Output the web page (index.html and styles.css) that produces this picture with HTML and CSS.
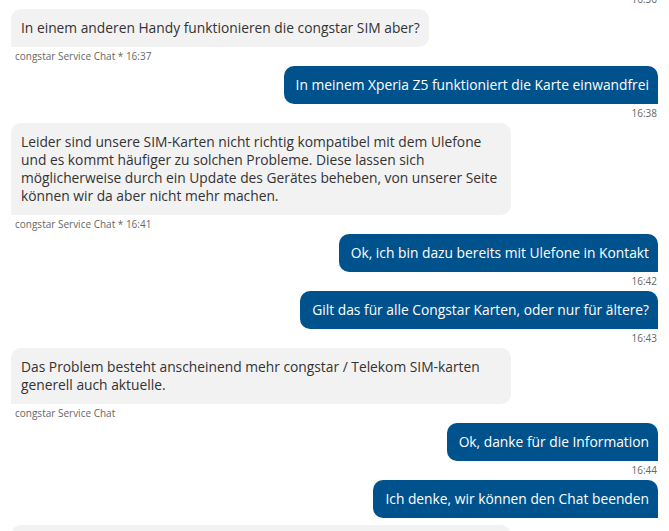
FILE: index.html
```html
<!DOCTYPE html>
<html lang="de">
<head>
<meta charset="utf-8">
<title>congstar Service Chat</title>
<link rel="stylesheet" href="styles.css">
</head>
<body>
<div class="chat">
  <div class="msg out"><div class="meta">16:36</div></div>

  <div class="msg in">
    <div class="bubble">In einem anderen Handy funktionieren die congstar SIM aber?</div>
    <div class="meta">congstar Service Chat * 16:37</div>
  </div>

  <div class="msg out">
    <div class="bubble">In meinem Xperia Z5 funktioniert die Karte einwandfrei</div>
    <div class="meta">16:38</div>
  </div>

  <div class="msg in">
    <div class="bubble">Leider sind unsere SIM-Karten nicht richtig kompatibel mit dem Ulefone und es kommt häufiger zu solchen Probleme. Diese lassen sich möglicherweise durch ein Update des Gerätes beheben, von unserer Seite können wir da aber nicht mehr machen.</div>
    <div class="meta">congstar Service Chat * 16:41</div>
  </div>

  <div class="msg out">
    <div class="bubble">Ok, ich bin dazu bereits mit Ulefone in Kontakt</div>
    <div class="meta">16:42</div>
  </div>

  <div class="msg out">
    <div class="bubble">Gilt das für alle Congstar Karten, oder nur für ältere?</div>
    <div class="meta">16:43</div>
  </div>

  <div class="msg in">
    <div class="bubble">Das Problem besteht anscheinend mehr congstar / Telekom SIM-karten generell auch aktuelle.</div>
    <div class="meta">congstar Service Chat</div>
  </div>

  <div class="msg out">
    <div class="bubble">Ok, danke für die Information</div>
    <div class="meta">16:44</div>
  </div>

  <div class="msg out last">
    <div class="bubble">Ich denke, wir können den Chat beenden</div>
  </div>

  <div class="msg in">
    <div class="bubble">Vielen Dank für Ihre Geduld. Gibt es sonst noch etwas, bei dem ich Ihnen weiterhelfen kann?</div>
  </div>
</div>
</body>
</html>
```

FILE: styles.css
```css
html, body {
  margin: 0;
  padding: 0;
  background: #ffffff;
  overflow: hidden;
}

.chat {
  display: flex;
  flex-direction: column;
  padding: 0 11px;
  margin-top: -10px;
  font-family: "Open Sans", "Liberation Sans", sans-serif;
  font-size: 13.8px;
}

.msg {
  display: flex;
  flex-direction: column;
}

.msg.in {
  align-items: flex-start;
}

.msg.out {
  align-items: flex-end;
}

.msg.last {
  margin-bottom: 7px;
}

.bubble {
  padding: 10px 9px 10px 10px;
  line-height: 18px;
  max-width: 481px;
}

.msg.in .bubble {
  background: #f2f2f2;
  color: #333333;
  border-radius: 10px 10px 10px 0;
}

.msg.out .bubble {
  background: #00528c;
  color: #ffffff;
  border-radius: 10px 10px 0 10px;
  padding-left: 12px;
}

.meta {
  font-size: 10px;
  line-height: 12px;
  color: #666666;
  padding: 3px 1px 4px 4px;
}
```
